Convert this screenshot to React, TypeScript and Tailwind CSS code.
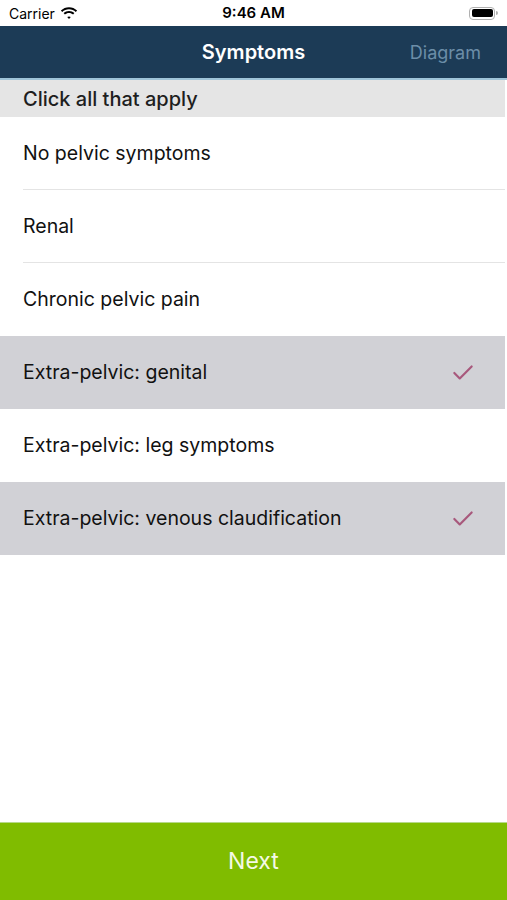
import { Check } from "lucide-react";

const items = [
  { label: "No pelvic symptoms", selected: false },
  { label: "Renal", selected: false },
  { label: "Chronic pelvic pain", selected: false },
  { label: "Extra-pelvic: genital", selected: true },
  { label: "Extra-pelvic: leg symptoms", selected: false },
  { label: "Extra-pelvic: venous claudification", selected: true },
];

export default function App() {
  return (
    <div
      className="flex flex-col h-[900px] w-[507px] bg-white text-black overflow-hidden"
      style={{ fontFamily: "Inter, 'Liberation Sans', sans-serif" }}
    >
      {/* Status bar */}
      <div className="flex items-center justify-between h-[26px] px-[9px] relative">
        <div className="flex items-center gap-[5px] text-[14px] text-black">
          <span>Carrier</span>
          <WifiIcon />
        </div>
        <span className="absolute left-1/2 -translate-x-1/2 text-[15px] font-semibold">9:46 AM</span>
        <BatteryIcon />
      </div>

      {/* Nav bar */}
      <header className="relative flex items-center justify-center h-[54px] bg-[#1c3b56] border-b-2 border-[#9fc4d8]">
        <span className="text-white text-[20px] font-semibold">Symptoms</span>
        <span className="absolute right-[26px] text-[18px] text-[#6c8ea8]">Diagram</span>
      </header>

      {/* Section header */}
      <div className="h-[37px] w-[505px] bg-[#e5e5e5] flex items-center pl-[23px] text-[20px] font-medium text-[#1e1e1e]">
        Click all that apply
      </div>

      {/* List */}
      <ul className="w-[505px]">
        {items.map((item, i) => (
          <Row key={item.label} {...item} last={i === items.length - 1} nextSelected={items[i + 1]?.selected} />
        ))}
      </ul>

      <div className="flex-1" />

      {/* Next button */}
      <button className="h-[78px] w-full bg-[#80bc00] border-t border-[#b7d98a] text-[#f4f9e6] text-[23px]">
        Next
      </button>
    </div>
  );
}

interface RowProps {
  label: string;
  selected: boolean;
  last?: boolean;
  nextSelected?: boolean;
}

function Row({ label, selected, last = false, nextSelected = false }: RowProps) {
  const showLine = !selected && !last && !nextSelected;
  return (
    <li className={`relative flex items-center h-[73px] pl-[23px] pr-[29px] ${selected ? "bg-[#d1d1d6]" : "bg-white"}`}>
      <span className="flex-1 text-[19.5px] text-[#111]">{label}</span>
      {selected && <Check className="w-[26px] h-[26px] text-[#a8587c]" strokeWidth={2} />}
      {showLine && <span className="absolute bottom-0 left-[23px] right-0 h-px bg-[#e4e4e4]" />}
    </li>
  );
}

function WifiIcon() {
  return (
    <svg width="18" height="13" viewBox="0 0 18 13" fill="#000">
      <path d="M9 2.2c2.6 0 5 1 6.8 2.7l1.3-1.4C14.9 1.4 12 .2 9 .2S3.1 1.4.9 3.5l1.3 1.4C4 3.2 6.4 2.2 9 2.2z" />
      <path d="M9 5.9c1.6 0 3 .6 4.1 1.6l1.3-1.4C13 4.8 11.1 4 9 4S5 4.8 3.6 6.1l1.3 1.4C6 6.5 7.4 5.9 9 5.9z" />
      <path d="M9 9.4c.7 0 1.3.3 1.8.7L9 12 7.2 10.1c.5-.4 1.1-.7 1.8-.7z" />
    </svg>
  );
}

function BatteryIcon() {
  return (
    <div className="flex items-center">
      <div className="w-[26px] h-[13px] rounded-[4px] border border-[#b0b0b0] p-[1.5px]">
        <div className="w-full h-full rounded-[2px] bg-black" />
      </div>
      <div className="w-[2px] h-[4px] rounded-r-sm bg-[#b0b0b0] ml-[1px]" />
    </div>
  );
}
